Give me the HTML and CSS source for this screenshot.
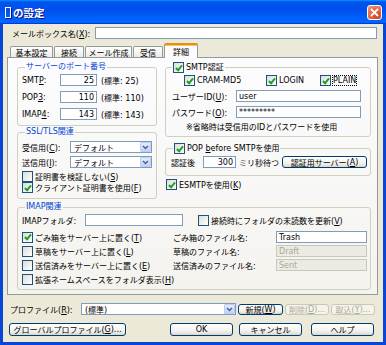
FILE: index.html
```html
<!DOCTYPE html>
<html lang="ja">
<head>
    <meta charset="UTF-8">
    <title>の設定</title>
    <link rel="stylesheet" href="styles.css">
</head>
<body>
<div class="win">
    <div class="titlebar">
        <span class="ttl"><span class="tofu"></span>の設定</span>
        <span class="close">
            <svg width="9" height="9" viewBox="0 0 9 9"><path d="M1 1L8 8M8 1L1 8" stroke="#fff" stroke-width="1.8"/></svg>
        </span>
    </div>
    <div class="client">
        <div class="namerow">
            <span class="lbl-name">メールボックス名(<u>X</u>):</span>
            <span class="tb tb-name"></span>
        </div>

        <div class="tabs">
            <span class="tab w1">基本設定</span>
            <span class="tab w2">接続</span>
            <span class="tab w3">メール作成</span>
            <span class="tab w4">受信</span>
            <span class="tab on">詳細</span>
        </div>

        <div class="panel">
            <div class="cols">
                <div class="col-l">
                    <fieldset class="grp g-port">
                        <legend class="gt">サーバーのポート番号</legend>
                        <div class="prow"><span class="plbl">SMT<u>P</u>:</span><span class="tb num">25</span><span class="pstd">(標準: 25)</span></div>
                        <div class="prow"><span class="plbl">POP<u>3</u>:</span><span class="tb num">110</span><span class="pstd">(標準: 110)</span></div>
                        <div class="prow"><span class="plbl">IMAP<u>4</u>:</span><span class="tb num">143</span><span class="pstd">(標準: 143)</span></div>
                    </fieldset>
                    <fieldset class="grp g-ssl">
                        <legend class="gt">SSL/TLS関連</legend>
                        <div class="srow"><span class="slbl">受信用(<u>C</u>):</span>
                            <span class="sel s-ssl"><span class="sel-v">デフォルト</span><span class="sel-btn"><svg width="7" height="5" viewBox="0 0 7 5"><path d="M1 1L3.5 3.5L6 1" fill="none" stroke="#4d6185" stroke-width="1.5"/></svg></span></span>
                        </div>
                        <div class="srow"><span class="slbl">送信用(<u>I</u>):</span>
                            <span class="sel s-ssl"><span class="sel-v">デフォルト</span><span class="sel-btn"><svg width="7" height="5" viewBox="0 0 7 5"><path d="M1 1L3.5 3.5L6 1" fill="none" stroke="#4d6185" stroke-width="1.5"/></svg></span></span>
                        </div>
                        <div class="cbrow"><span class="cb"></span><span>証明書を検証しない(<u>S</u>)</span></div>
                        <div class="cbrow"><span class="cb on"></span><span>クライアント証明書を使用(<u>F</u>)</span></div>
                    </fieldset>
                </div>

                <div class="col-r">
                    <fieldset class="grp g-auth">
                        <legend class="gt gt-cb"><span class="cb on"></span><span>SMTP認証</span></legend>
                        <div class="mrow">
                            <span class="meth m1"><span class="cb on"></span>CRAM-MD5</span>
                            <span class="meth m2"><span class="cb on"></span>LOGIN</span>
                            <span class="meth"><span class="cb on"></span><span class="focus">PLAIN</span></span>
                        </div>
                        <div class="arow"><span class="albl">ユーザーID(<u>U</u>):</span><span class="tb a-in">user</span></div>
                        <div class="arow"><span class="albl">パスワード(<u>O</u>):</span><span class="tb a-in">*********</span></div>
                        <div class="note">※省略時は受信用のIDとパスワードを使用</div>
                    </fieldset>
                    <fieldset class="grp g-pop">
                        <legend class="gt gt-cb"><span class="cb on"></span><span>POP <u>b</u>efore SMTPを使用</span></legend>
                        <div class="poprow">
                            <span class="poplbl">認証後</span>
                            <span class="tb num wait">300</span>
                            <span class="popms">ミリ秒待つ</span>
                            <span class="btn b-srv">認証用サーバー(<u>A</u>)</span>
                        </div>
                    </fieldset>
                    <div class="cbrow esmtp"><span class="cb on"></span><span>ESMTPを使用(<u>K</u>)</span></div>
                </div>
            </div>

            <fieldset class="grp g-imap">
                <legend class="gt">IMAP関連</legend>
                <div class="irow">
                    <span class="ilbl">IMAPフォルダ:</span>
                    <span class="tb i-in"></span>
                    <span class="cbrow upd"><span class="cb"></span><span>接続時にフォルダの未読数を更新(<u>V</u>)</span></span>
                </div>
                <div class="igrid">
                    <span class="cbrow"><span class="cb on"></span><span>ごみ箱をサーバー上に置く(<u>T</u>)</span></span>
                    <span class="flbl">ごみ箱のファイル名:</span>
                    <span class="tb f-in">Trash</span>

                    <span class="cbrow"><span class="cb"></span><span>草稿をサーバー上に置く(<u>L</u>)</span></span>
                    <span class="flbl">草稿のファイル名:</span>
                    <span class="tb f-in off">Draft</span>

                    <span class="cbrow"><span class="cb"></span><span>送信済みをサーバー上に置く(<u>E</u>)</span></span>
                    <span class="flbl">送信済みのファイル名:</span>
                    <span class="tb f-in off">Sent</span>

                    <span class="cbrow"><span class="cb"></span><span>拡張ネームスペースをフォルダ表示(<u>H</u>)</span></span>
                </div>
            </fieldset>
        </div>

        <div class="profrow">
            <span class="prlbl">プロファイル(<u>R</u>):</span>
            <span class="sel s-prof"><span class="sel-v">(標準)</span><span class="sel-btn"><svg width="7" height="5" viewBox="0 0 7 5"><path d="M1 1L3.5 3.5L6 1" fill="none" stroke="#4d6185" stroke-width="1.5"/></svg></span></span>
            <span class="btn b-new">新規(<u>W</u>)</span>
            <span class="btn b-sm dis">削除(<u>D</u>)...</span>
            <span class="btn b-sm dis">取込(<u>Y</u>)...</span>
        </div>

        <div class="btnrow">
            <span class="btn b-glob">グローバルプロファイル(<u>G</u>)...</span>
            <span class="btn b-dlg b-ok">OK</span>
            <span class="btn b-dlg b-cancel">キャンセル</span>
            <span class="btn b-dlg b-help">ヘルプ</span>
        </div>
    </div>
</div>
</body>
</html>
```

FILE: styles.css
```css
body {
    margin: 0;
    font-family: "DejaVu Sans", "Noto Sans CJK JP", sans-serif;
    font-size: 8px;
    color: #000;
}

u {
    text-decoration-thickness: 1px;
    text-underline-offset: 1px;
}

.win {
    width: 386px;
    height: 345px;
    display: flex;
    flex-direction: column;
    background: #0846d8;
}

/* タイトルバー */
.titlebar {
    height: 24px;
    flex: none;
    display: flex;
    align-items: center;
    padding: 0 4px 0 5px;
    background: linear-gradient(#0997ff, #0053ee 8%, #0050ee 40%, #06f 88%, #06f 93%, #005bff 95%, #003dd7 96%, #003dd7);
}

.ttl {
    color: #fff;
    font-weight: bold;
    font-size: 10.5px;
    text-shadow: 1px 1px #0f1089;
    display: flex;
    align-items: center;
}

.tofu {
    width: 4px;
    height: 9px;
    border: 1px solid #fff;
    margin-right: 2px;
    box-shadow: 1px 1px #0f1089;
}

.close {
    margin-left: auto;
    width: 15px;
    height: 15px;
    box-sizing: border-box;
    border: 1px solid #fff;
    border-radius: 3px;
    background: radial-gradient(circle at 70% 80%, #cc4628, #e6704c 60%, #f0a080);
    display: flex;
    align-items: center;
    justify-content: center;
}

.client {
    flex: 1;
    margin: 0 3px 3px;
    background: #ece9d8;
    display: flex;
    flex-direction: column;
}

/* 共通部品 */
.tb {
    display: flex;
    align-items: center;
    height: 12px;
    box-sizing: border-box;
    border: 1px solid #7f9db9;
    background: #fff;
    padding: 0 2px;
    white-space: nowrap;
}

.tb.num {
    justify-content: flex-end;
}

.tb.off {
    background: #ebebe4;
    border-color: #c9c7ba;
    color: #aca899;
}

.sel {
    display: flex;
    height: 12px;
    box-sizing: border-box;
    border: 1px solid #7f9db9;
    background: #fff;
}

.sel-v {
    flex: 1;
    padding-left: 3px;
    display: flex;
    align-items: center;
}

.sel-btn {
    width: 11px;
    margin: 0;
    border-radius: 1px;
    border: 1px solid #b9cdf7;
    background: linear-gradient(#e3ebfd, #c1d3fb);
    display: flex;
    align-items: center;
    justify-content: center;
    box-sizing: border-box;
}

.cb {
    width: 9px;
    height: 9px;
    flex: none;
    border: 1px solid #1c5180;
    background: linear-gradient(135deg, #dcdcd7, #fff);
    position: relative;
    margin-right: 2px;
}

.cb.on::after {
    content: "";
    position: absolute;
    left: 2.5px;
    top: 0.5px;
    width: 2px;
    height: 5px;
    border: solid #21a121;
    border-width: 0 2px 2px 0;
    transform: rotate(40deg);
}

.cbrow {
    display: flex;
    align-items: center;
    height: 11px;
    white-space: nowrap;
}

.btn {
    display: flex;
    align-items: center;
    justify-content: center;
    height: 13px;
    box-sizing: border-box;
    border: 1px solid #003c74;
    border-radius: 3px;
    background: linear-gradient(#fff, #f5f4ef 55%, #e6e3d6 88%, #d6d0c5);
    white-space: nowrap;
}

.btn.dis {
    border-color: #c9c7ba;
    color: #aca899;
    background: #f5f4ea;
}

/* メールボックス名 */
.namerow {
    display: flex;
    align-items: center;
    height: 12px;
    margin-top: 3px;
    padding: 0 6px 0 9px;
}

.lbl-name {
    width: 83px;
    flex: none;
}

.tb-name {
    flex: 1;
}

/* タブ */
.tabs {
    display: flex;
    align-items: flex-end;
    height: 14px;
    margin-top: 4px;
    padding-left: 7px;
}

.tab {
    height: 11px;
    box-sizing: border-box;
    border: 1px solid #919b9c;
    border-bottom: none;
    border-radius: 2px 2px 0 0;
    background: linear-gradient(#fff, #ecebe6);
    display: flex;
    align-items: center;
    justify-content: center;
    margin-right: 1px;
}

.w1 { width: 43px; }
.w2 { width: 30px; }
.w3 { width: 47px; }
.w4 { width: 30px; }

.tab.on {
    width: 34px;
    height: 15px;
    margin-bottom: -1px;
    border-top: 2px solid #e68b2c;
    box-shadow: inset 0 1px #ffc73c;
    background: #fcfcfe;
    position: relative;
    z-index: 1;
}

.panel {
    height: 238px;
    box-sizing: border-box;
    margin: 0 5px 0 4px;
    border: 1px solid #919b9c;
    background: linear-gradient(#fcfcfe, #f4f3ee);
    padding: 4px 6px 0 9px;
}

.cols {
    display: flex;
    gap: 8px;
}

.col-l {
    width: 140px;
    flex: none;
}

.col-r {
    flex: 1;
}

/* グループボックス */
.grp {
    margin: 0;
    padding: 0 4px;
    border: 1px solid #d0d0bf;
    border-radius: 3px;
    box-sizing: border-box;
    min-width: 0;
}

.gt {
    padding: 0 1px;
    margin-left: 3px;
    color: #0046d5;
    line-height: 10px;
    height: 10px;
}

.gt-cb {
    color: #000;
    display: flex;
    align-items: center;
    height: 11px;
    margin-left: 2px;
    white-space: nowrap;
}

.g-port {
    height: 64px;
    padding-top: 2px;
}

.prow {
    display: flex;
    align-items: center;
    height: 12px;
    margin-bottom: 5px;
}

.plbl {
    width: 38px;
    padding-left: 0;
}

.prow .tb {
    width: 37px;
}

.pstd {
    margin-left: 4px;
    white-space: nowrap;
}

.g-ssl {
    height: 72px;
    margin-top: 1px;
    padding-top: 4px;
}

.srow {
    display: flex;
    align-items: center;
    height: 12px;
    margin-bottom: 3px;
}

.slbl {
    width: 48px;
    flex: none;
}

.s-ssl {
    width: 85px;
}

.g-auth {
    height: 75px;
    padding-top: 2px;
}

.mrow {
    display: flex;
    height: 11px;
    padding-left: 14px;
}

.meth {
    display: flex;
    align-items: center;
}

.m1 { width: 82px; }
.m2 { width: 54px; }

.focus {
    outline: 1px dotted #000;
    outline-offset: 0;
}

.arow {
    display: flex;
    align-items: center;
    height: 12px;
    margin-top: 4px;
    padding-left: 2px;
}

.albl {
    width: 64px;
    flex: none;
}

.a-in {
    width: 125px;
}

.note {
    margin-top: 3px;
    padding-left: 16px;
    height: 11px;
    display: flex;
    align-items: center;
    white-space: nowrap;
}

.g-pop {
    height: 33px;
    margin-top: 6px;
    padding: 2px 3px 0 5px;
}

.poprow {
    display: flex;
    align-items: center;
    height: 12px;
}

.poplbl {
    width: 32px;
}

.wait {
    width: 33px;
}

.popms {
    margin-left: 3px;
}

.b-srv {
    margin-left: auto;
    width: 85px;
    height: 12px;
}

.esmtp {
    margin-top: 3px;
    padding-left: 1px;
}

/* IMAP */
.g-imap {
    height: 88px;
    margin-top: 3px;
    padding: 2px 4px 0;
}

.irow {
    display: flex;
    align-items: center;
    height: 12px;
}

.ilbl {
    width: 63px;
    flex: none;
}

.i-in {
    width: 98px;
}

.upd {
    margin-left: 15px;
}

.igrid {
    display: grid;
    grid-template-columns: 151px 103px 91px;
    grid-auto-rows: 14px;
    align-items: center;
    margin-top: 4px;
}

.flbl {
    white-space: nowrap;
}

/* 下部 */
.profrow {
    display: flex;
    align-items: center;
    height: 12px;
    margin-top: 8px;
    padding-left: 7px;
}

.prlbl {
    width: 71px;
    flex: none;
}

.s-prof {
    width: 155px;
}

.profrow .btn {
    height: 11px;
}

.b-new {
    width: 45px;
    margin-left: 2px;
}

.b-sm {
    width: 44px;
    margin-left: 2px;
}

.btnrow {
    display: flex;
    align-items: center;
    margin-top: 8px;
    padding-left: 6px;
}

.b-glob {
    width: 117px;
}

.b-dlg {
    width: 63px;
}

.b-ok {
    margin-left: 44px;
}

.b-cancel {
    margin-left: 6px;
}

.b-help {
    margin-left: 9px;
}
```
